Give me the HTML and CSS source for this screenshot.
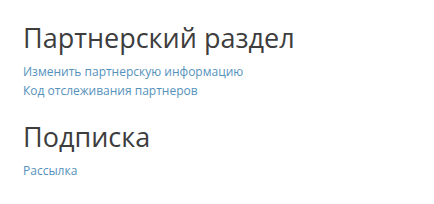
FILE: index.html
```html
<!DOCTYPE html>
<html lang="ru">
<head>
    <meta charset="UTF-8">
    <title>Партнерский раздел</title>
    <link rel="stylesheet" href="styles.css">
</head>
<body>
    <div class="section">
        <h2>Партнерский раздел</h2>
        <ul class="links">
            <li><a href="#">Изменить партнерскую информацию</a></li>
            <li><a href="#">Код отслеживания партнеров</a></li>
        </ul>
    </div>

    <div class="section">
        <h2>Подписка</h2>
        <ul class="links">
            <li><a href="#">Рассылка</a></li>
        </ul>
    </div>
</body>
</html>
```

FILE: styles.css
```css
body {
    font-family: "Open Sans", Arial, sans-serif;
    margin: 0;
    padding: 19px 23px 10px;
    background: #fff;
    color: #444;
}
.section {
    margin-bottom: 18px;
}
.section:last-child {
    margin-bottom: 0;
}
.section h2 {
    font-size: 27px;
    font-weight: 400;
    line-height: 38px;
    margin: 0 0 5px;
    color: #3d3d3d;
}
.links {
    list-style: none;
    margin: 0;
    padding: 0;
}
.links li {
    font-size: 12px;
    line-height: 19px;
}
.links a {
    color: #5592bb;
    text-decoration: none;
}
```
